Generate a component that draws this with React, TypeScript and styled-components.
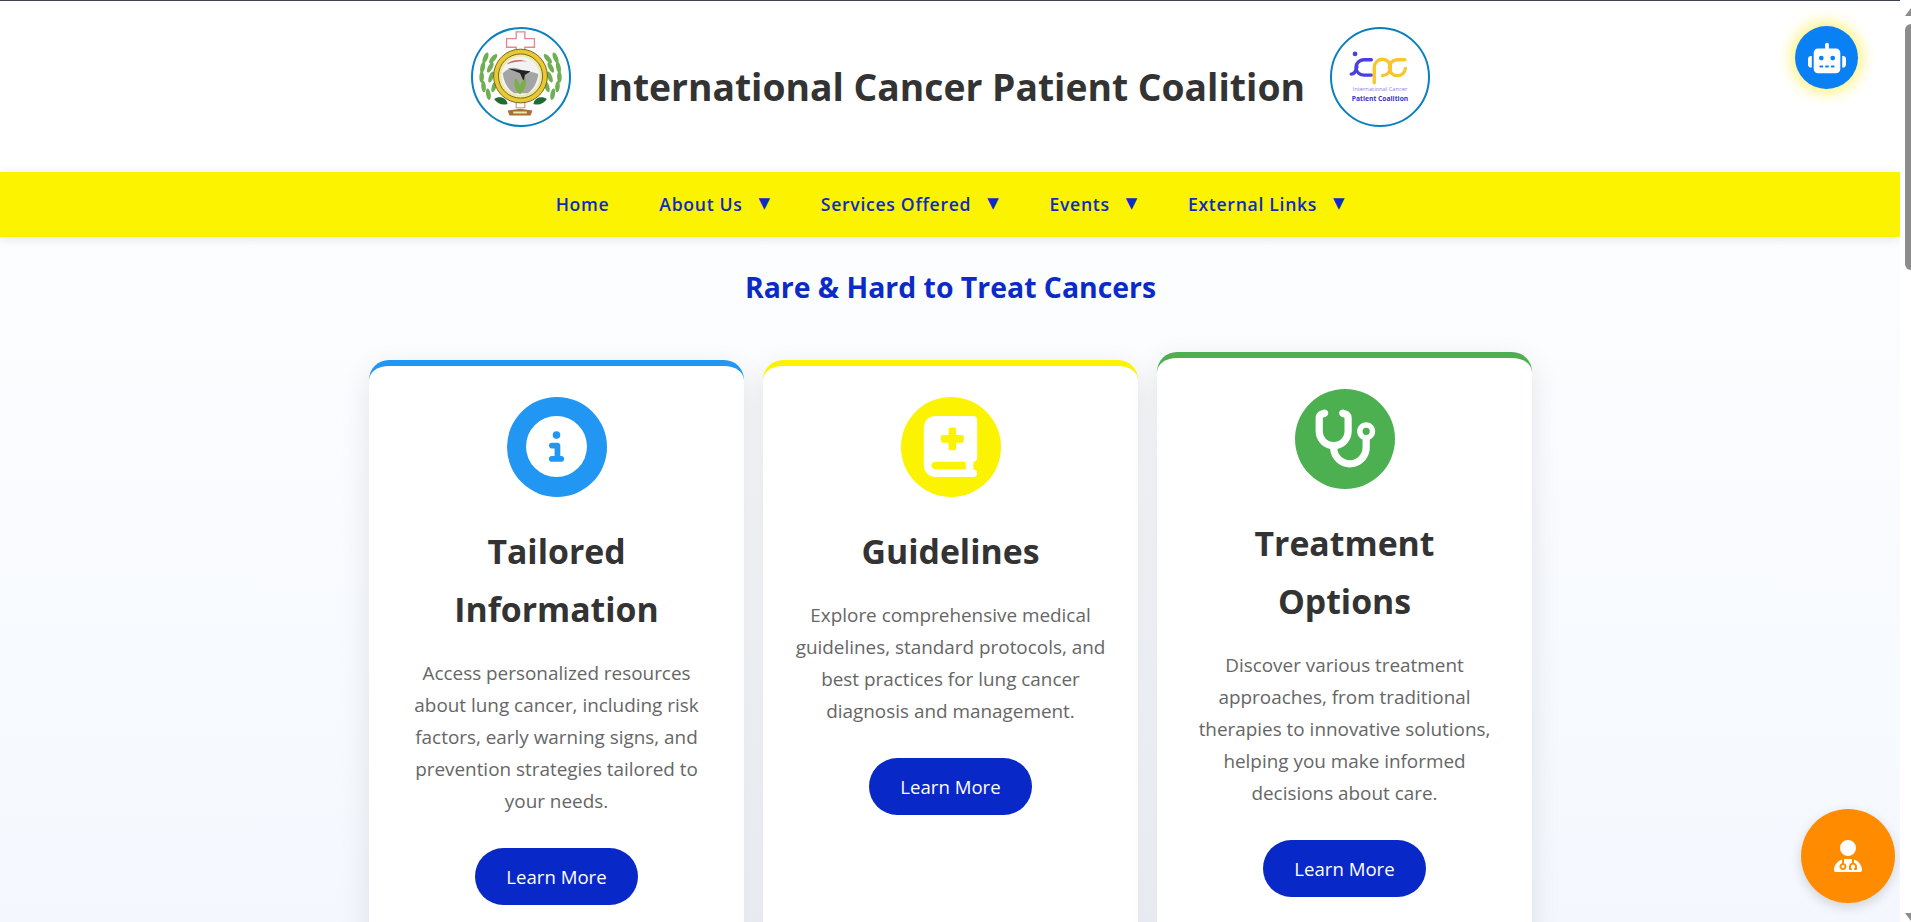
import React from "react";
import styled, { createGlobalStyle } from "styled-components";
import { FaBookMedical, FaCircleInfo, FaRobot, FaStethoscope, FaUserDoctor } from "react-icons/fa6";

const GlobalStyle = createGlobalStyle`
  html, body {
    margin: 0;
    padding: 0;
    height: 100%;
    overflow: hidden;
  }
  body {
    font-family: "Open Sans", "Noto Sans", sans-serif;
    background: #fff;
  }
  * { box-sizing: border-box; }
`;

const Page = styled.div`
  width: 1901px;
  height: 922px;
  overflow: hidden;
  border-top: 1px solid #3c4250;
  background: linear-gradient(180deg, #ffffff 0%, #f4f8fe 100%);
`;

const Header = styled.header`
  display: flex;
  justify-content: center;
  align-items: center;
  gap: 25px;
  height: 171px;
  padding-bottom: 19px;
  background: #fff;
`;

const Logo = styled.div`
  width: 100px;
  height: 100px;
  flex-shrink: 0;
  border-radius: 50%;
  border: 2px solid #0a80bd;
  background: #fff;
  overflow: hidden;
  svg { display: block; width: 100%; height: 100%; }
`;

const Title = styled.h1`
  margin: 0;
  font-size: 37.25px;
  font-weight: 700;
  color: #333;
  line-height: 1.2;
  padding-top: 21px;
`;

const Nav = styled.nav`
  display: flex;
  justify-content: center;
  align-items: center;
  gap: 50px;
  height: 65px;
  padding-bottom: 2px;
  background: #fbf300;
  box-shadow: 0 2px 10px rgba(0, 0, 0, 0.1);
`;

const NavItem = styled.a`
  display: flex;
  align-items: center;
  gap: 16px;
  font-size: 17.6px;
  font-weight: 600;
  letter-spacing: 0.7px;
  color: #0a2bc8;
`;

const Caret = styled.span`
  font-size: 15px;
  line-height: 1;
  font-family: "DejaVu Sans", sans-serif;
`;

const Heading = styled.h2`
  margin: 32px 0 54px;
  text-align: center;
  font-size: 28.4px;
  line-height: 1.3;
  font-weight: 700;
  color: #0a2bc8;
`;

const CardGrid = styled.section`
  display: flex;
  justify-content: center;
  align-items: stretch;
  gap: 19px;
`;

const Card = styled.article<{ $accent: string; $raised?: boolean }>`
  flex: 0 0 375px;
  height: 640px;
  padding: 31px 32px;
  display: flex;
  flex-direction: column;
  align-items: center;
  background: #fff;
  border-top: 6px solid ${(p) => p.$accent};
  border-radius: 20px;
  box-shadow: 0 10px 30px rgba(0, 0, 0, 0.1);
  text-align: center;
  transform: translateY(${(p) => (p.$raised ? "-8px" : "0")});
`;

const IconCircle = styled.div<{ $bg: string }>`
  width: 100px;
  height: 100px;
  flex-shrink: 0;
  border-radius: 50%;
  background: ${(p) => p.$bg};
  color: #fff;
  display: flex;
  align-items: center;
  justify-content: center;
`;

const CardTitle = styled.h3`
  margin: 25px 0 19px;
  font-size: 33.8px;
  line-height: 58px;
  font-weight: 700;
  color: #333;
`;

const CardText = styled.p`
  margin: 0 0 31px;
  font-size: 18.9px;
  line-height: 32px;
  color: #666;
`;

const LearnMore = styled.button`
  width: 163px;
  height: 57px;
  flex-shrink: 0;
  border: none;
  border-radius: 30px;
  background: #0828c8;
  color: #fff;
  font-family: inherit;
  font-size: 18.6px;
  font-weight: 400;
`;

const RobotButton = styled.div`
  position: fixed;
  left: 1795px;
  top: 26px;
  width: 63px;
  height: 63px;
  border-radius: 50%;
  background: #0a80f5;
  color: #fff;
  box-shadow: 0 0 15px 3px rgba(255, 235, 59, 0.75);
  display: flex;
  align-items: center;
  justify-content: center;
`;

const DoctorButton = styled.div`
  position: fixed;
  left: 1801px;
  top: 809px;
  width: 94px;
  height: 94px;
  border-radius: 50%;
  background: #ff8c00;
  color: #fff;
  box-shadow: 0 4px 12px rgba(0, 0, 0, 0.15);
  display: flex;
  align-items: center;
  justify-content: center;
`;

const Scrollbar = styled.div`
  position: fixed;
  left: 1900px;
  top: 0;
  bottom: 0;
  width: 11px;
  overflow: hidden;
  background: #fff;
`;

const ScrollThumb = styled.div`
  position: absolute;
  top: 24px;
  left: 5px;
  width: 12px;
  height: 246px;
  border-radius: 6px;
  background: #8c8c8c;
`;

const ScrollArrow = styled.div<{ $down?: boolean }>`
  position: absolute;
  left: 5px;
  ${(p) => (p.$down ? "bottom: 1px;" : "top: 8px;")}
  width: 0;
  height: 0;
  border-left: 6px solid transparent;
  border-right: 6px solid transparent;
  ${(p) => (p.$down ? "border-top: 8px solid #8c8c8c;" : "border-bottom: 8px solid #8c8c8c;")}
`;

const leaves = [
  { x: 16, y: 68, r: -10 },
  { x: 11, y: 60, r: -5 },
  { x: 22, y: 60, r: 18 },
  { x: 9, y: 50, r: 2 },
  { x: 19, y: 50, r: 22 },
  { x: 10, y: 40, r: 12 },
  { x: 18, y: 40, r: 28 },
  { x: 13, y: 30, r: 22 },
  { x: 21, y: 31, r: 40 },
];

const EmblemLogo = () => (
  <svg viewBox="0 0 100 100">
    <path d="M45 3h9v7h10v9H54v8H45v-8H35v-9h10z" fill="#fff" stroke="#e08a8e" strokeWidth="1.4" />
    {leaves.map((l) => (
      <React.Fragment key={`${l.x}-${l.y}`}>
        <ellipse cx={l.x} cy={l.y} rx="2.4" ry="6" fill="#6fae52" transform={`rotate(${l.r} ${l.x} ${l.y})`} />
        <ellipse cx={99 - l.x} cy={l.y} rx="2.4" ry="6" fill="#6fae52" transform={`rotate(${-l.r} ${99 - l.x} ${l.y})`} />
      </React.Fragment>
    ))}
    <path d="M22 73c3 5 9 7 14 5-1-6-8-9-14-5zM77 73c-3 5-9 7-14 5 1-6 8-9 14-5z" fill="#1f6b35" />
    <path d="M45 76h9v6h-9z" fill="#fff" stroke="#e08a8e" strokeWidth="1.2" />
    <circle cx="49.500" cy="49" r="28" fill="#e9c92f" stroke="#6f6420" strokeWidth="1" />
    <circle cx="49.500" cy="49" r="23" fill="#efe9a8" stroke="#6f6420" strokeWidth="1" />
    <circle cx="49.500" cy="49" r="20" fill="#f2f2f2" />
    <path d="M31 46c6-6 12-7 18-4s13 2 19 5c-1 9-5 16-11 20H43c-7-4-11-12-12-21z" fill="#a5a5a5" />
    <path d="M35 37c4-5 14-6 22-3-7-1-15 0-22 3z" fill="#c66" />
    <path d="M36 41l24 3-6 4-1 7-4-9z" fill="#222" />
    <path d="M49 68c-6-5-7-11-5-17 3 3 4 5 5 8 1-3 2-5 6-8 1 6 0 12-6 17z" fill="#7cae49" />
    <path d="M36 85l13-2 13 2-2 5H38z" fill="#a9713a" />
    <path d="M42 86h14v2H42z" fill="#efe9a8" />
  </svg>
);

const CpcLogo = () => (
  <svg viewBox="0 0 100 100">
    <circle cx="24" cy="26" r="2.500" fill="#4a3fe0" />
    <g fill="none" strokeWidth="3.500" strokeLinecap="round">
      <path d="M20 47c3 0 5-3 6-8" stroke="#4a3fe0" />
      <path d="M41 32h-8a8 8 0 0 0 0 16h8" stroke="#4a3fe0" />
      <path d="M44 56V40a8.500 8.500 0 1 1 8.500 8.500" stroke="#f7c52e" />
      <path d="M76 32h-8a8.300 8.300 0 0 0 0 16.600 8.300 8.300 0 0 0 8.500-7.500" stroke="#f7c52e" />
    </g>
    <text x="50" y="65" textAnchor="middle" fontSize="6" fill="#8b85e8" fontFamily="Open Sans, sans-serif">International Cancer</text>
    <text x="50" y="74.500" textAnchor="middle" fontSize="7" fontWeight="700" fill="#3a32c8" fontFamily="Open Sans, sans-serif">Patient Coalition</text>
  </svg>
);

const navItems: { label: string; caret?: boolean }[] = [
  { label: "Home" },
  { label: "About Us", caret: true },
  { label: "Services Offered", caret: true },
  { label: "Events", caret: true },
  { label: "External Links", caret: true },
];

const App = () => (
  <>
    <GlobalStyle />
    <Page>
      <Header>
        <Logo><EmblemLogo /></Logo>
        <Title>International Cancer Patient Coalition</Title>
        <Logo><CpcLogo /></Logo>
      </Header>
      <Nav>
        {navItems.map((item) => (
          <NavItem key={item.label}>
            {item.label}
            {item.caret && <Caret>▼</Caret>}
          </NavItem>
        ))}
      </Nav>
      <Heading>Rare &amp; Hard to Treat Cancers</Heading>
      <CardGrid>
        <Card $accent="#2196f3">
          <IconCircle $bg="#2196f3"><FaCircleInfo size={61} /></IconCircle>
          <CardTitle>Tailored Information</CardTitle>
          <CardText>
            Access personalized resources about lung cancer, including risk factors, early warning signs, and prevention strategies tailored to your needs.
          </CardText>
          <LearnMore>Learn More</LearnMore>
        </Card>
        <Card $accent="#fbf300">
          <IconCircle $bg="#fbf300"><FaBookMedical size={61} /></IconCircle>
          <CardTitle>Guidelines</CardTitle>
          <CardText>
            Explore comprehensive medical guidelines, standard protocols, and best practices for lung cancer diagnosis and management.
          </CardText>
          <LearnMore>Learn More</LearnMore>
        </Card>
        <Card $accent="#4caf50" $raised>
          <IconCircle $bg="#4caf50"><FaStethoscope size={65} /></IconCircle>
          <CardTitle>Treatment Options</CardTitle>
          <CardText>
            Discover various treatment approaches, from traditional therapies to innovative solutions, helping you make informed decisions about care.
          </CardText>
          <LearnMore>Learn More</LearnMore>
        </Card>
      </CardGrid>
      <RobotButton><FaRobot size={38} /></RobotButton>
      <DoctorButton><FaUserDoctor size={32} /></DoctorButton>
      <Scrollbar>
        <ScrollArrow />
        <ScrollThumb />
        <ScrollArrow $down />
      </Scrollbar>
    </Page>
  </>
);

export default App;
